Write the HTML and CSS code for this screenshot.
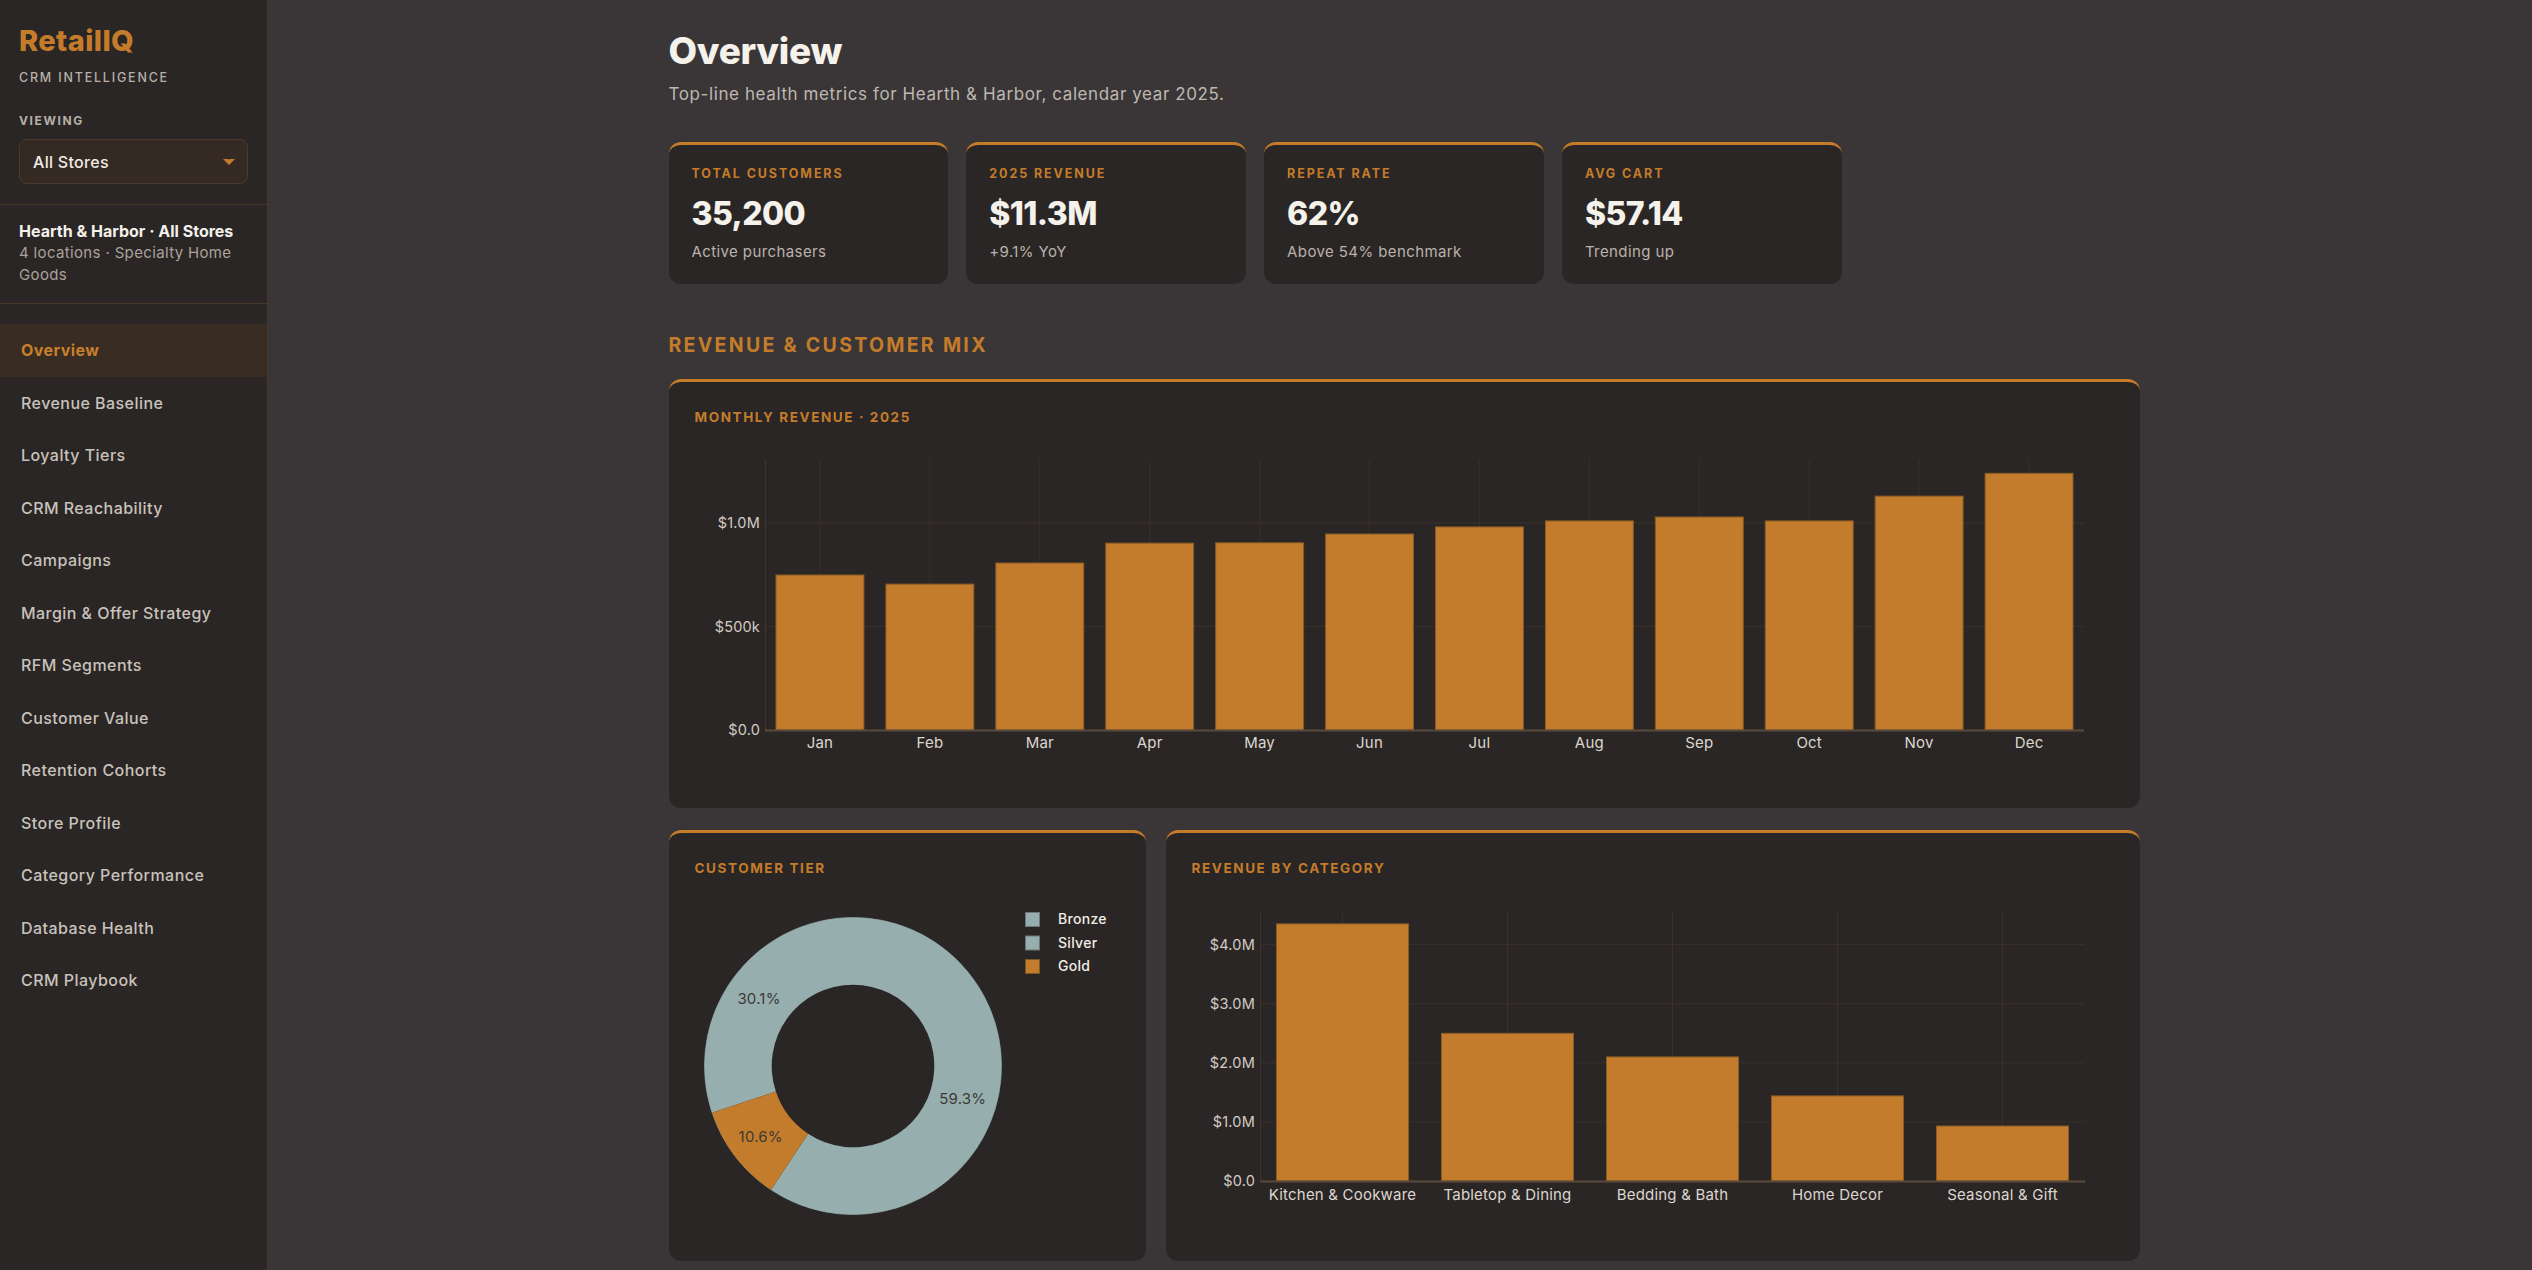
FILE: index.html
```html
<!DOCTYPE html>
<html lang="en">
<head>
<meta charset="utf-8">
<title>RetailIQ · Overview</title>
<link rel="stylesheet" href="styles.css">
</head>
<body>
<div class="app">
  <aside class="sidebar">
    <div class="brand">
      <div class="logo">RetailIQ</div>
      <div class="tagline">CRM INTELLIGENCE</div>
      <div class="viewing-label">VIEWING</div>
      <div class="select">
        <span>All Stores</span>
        <svg class="caret" width="12" height="6" viewBox="0 0 12 6"><polygon points="0,0 5.4,0 6,1 6.6,0 12,0 6,6" /></svg>
      </div>
    </div>
    <div class="store">
      <div class="store-name">Hearth &amp; Harbor · All Stores</div>
      <div class="store-desc">4 locations · Specialty Home Goods</div>
    </div>
    <nav class="nav">
      <a class="nav-item active">Overview</a>
      <a class="nav-item">Revenue Baseline</a>
      <a class="nav-item">Loyalty Tiers</a>
      <a class="nav-item">CRM Reachability</a>
      <a class="nav-item">Campaigns</a>
      <a class="nav-item">Margin &amp; Offer Strategy</a>
      <a class="nav-item">RFM Segments</a>
      <a class="nav-item">Customer Value</a>
      <a class="nav-item">Retention Cohorts</a>
      <a class="nav-item">Store Profile</a>
      <a class="nav-item">Category Performance</a>
      <a class="nav-item">Database Health</a>
      <a class="nav-item">CRM Playbook</a>
    </nav>
  </aside>

  <main class="main">
    <div class="content">
      <h1 class="page-title">Overview</h1>
      <p class="page-sub">Top-line health metrics for Hearth &amp; Harbor, calendar year 2025.</p>

      <div class="kpis">
        <div class="kpi">
          <div class="kpi-label">TOTAL CUSTOMERS</div>
          <div class="kpi-value">35,200</div>
          <div class="kpi-sub">Active purchasers</div>
        </div>
        <div class="kpi">
          <div class="kpi-label">2025 REVENUE</div>
          <div class="kpi-value">$11.3M</div>
          <div class="kpi-sub">+9.1% YoY</div>
        </div>
        <div class="kpi">
          <div class="kpi-label">REPEAT RATE</div>
          <div class="kpi-value">62%</div>
          <div class="kpi-sub">Above 54% benchmark</div>
        </div>
        <div class="kpi">
          <div class="kpi-label">AVG CART</div>
          <div class="kpi-value">$57.14</div>
          <div class="kpi-sub">Trending up</div>
        </div>
      </div>

      <h2 class="section-title">REVENUE &amp; CUSTOMER MIX</h2>

      <div class="card">
        <div class="card-title">MONTHLY REVENUE · 2025</div>
        <svg class="chart chart-monthly" viewBox="0 0 1419 350" width="1419" height="350">
          <g class="grid">
            <line x1="124.96" y1="18" x2="124.96" y2="288"/>
            <line x1="234.87" y1="18" x2="234.87" y2="288"/>
            <line x1="344.79" y1="18" x2="344.79" y2="288"/>
            <line x1="454.71" y1="18" x2="454.71" y2="288"/>
            <line x1="564.63" y1="18" x2="564.63" y2="288"/>
            <line x1="674.54" y1="18" x2="674.54" y2="288"/>
            <line x1="784.46" y1="18" x2="784.46" y2="288"/>
            <line x1="894.38" y1="18" x2="894.38" y2="288"/>
            <line x1="1004.29" y1="18" x2="1004.29" y2="288"/>
            <line x1="1114.21" y1="18" x2="1114.21" y2="288"/>
            <line x1="1224.13" y1="18" x2="1224.13" y2="288"/>
            <line x1="1334.04" y1="18" x2="1334.04" y2="288"/>
            <line x1="70" y1="81" x2="1389" y2="81"/>
            <line x1="70" y1="184.5" x2="1389" y2="184.5"/>
          </g>
          <line class="axis-y" x1="70.5" y1="18" x2="70.5" y2="288"/>
          <g class="bars">
            <rect x="80.99" y="133.0" width="87.93" height="155.0"/>
            <rect x="190.91" y="142.1" width="87.93" height="145.9"/>
            <rect x="300.82" y="121.0" width="87.93" height="167.0"/>
            <rect x="410.74" y="101.1" width="87.93" height="186.9"/>
            <rect x="520.66" y="100.8" width="87.93" height="187.2"/>
            <rect x="630.58" y="92.0" width="87.93" height="196.0"/>
            <rect x="740.49" y="84.9" width="87.93" height="203.1"/>
            <rect x="850.41" y="78.9" width="87.93" height="209.1"/>
            <rect x="960.33" y="75.0" width="87.93" height="213.0"/>
            <rect x="1070.24" y="78.9" width="87.93" height="209.1"/>
            <rect x="1180.16" y="54.1" width="87.93" height="233.9"/>
            <rect x="1290.08" y="31.3" width="87.93" height="256.7"/>
          </g>
          <line class="axis-x" x1="70" y1="288.5" x2="1389" y2="288.5"/>
          <g class="ytick">
            <text x="65" y="86">$1.0M</text>
            <text x="65" y="189.5">$500k</text>
            <text x="65" y="293">$0.0</text>
          </g>
          <g class="xtick">
            <text x="124.96" y="306">Jan</text>
            <text x="234.87" y="306">Feb</text>
            <text x="344.79" y="306">Mar</text>
            <text x="454.71" y="306">Apr</text>
            <text x="564.63" y="306">May</text>
            <text x="674.54" y="306">Jun</text>
            <text x="784.46" y="306">Jul</text>
            <text x="894.38" y="306">Aug</text>
            <text x="1004.29" y="306">Sep</text>
            <text x="1114.21" y="306">Oct</text>
            <text x="1224.13" y="306">Nov</text>
            <text x="1334.04" y="306">Dec</text>
          </g>
        </svg>
      </div>

      <div class="card-row">
        <div class="card card-tier">
          <div class="card-title">CUSTOMER TIER</div>
          <svg class="chart chart-donut" viewBox="0 0 425 352" width="425" height="352">
            <circle class="ring-edge" cx="158" cy="173" r="148.5"/>
            <path class="slice-silver" d="M158 24.5 A148.5 148.5 0 1 1 76.07 296.86 L113.15 240.81 A81.3 81.3 0 1 0 158 91.7 Z"/>
            <path class="slice-silver" d="M17.06 219.78 A148.5 148.5 0 0 1 158 24.5 L158 91.7 A81.3 81.3 0 0 0 80.84 198.61 Z"/>
            <path class="slice-gold" d="M76.07 296.86 A148.5 148.5 0 0 1 17.06 219.78 L80.84 198.61 A81.3 81.3 0 0 0 113.15 240.81 Z"/>
            <g class="slice-label">
              <text x="267.7" y="211">59.3%</text>
              <text x="64" y="111">30.1%</text>
              <text x="65.7" y="249">10.6%</text>
            </g>
            <g class="legend">
              <rect class="swatch-silver" x="330.5" y="19.5" width="14" height="14"/>
              <text x="363" y="31">Bronze</text>
              <rect class="swatch-silver" x="330.5" y="43" width="14" height="14"/>
              <text x="363" y="54.5">Silver</text>
              <rect class="swatch-gold" x="330.5" y="66.5" width="14" height="14"/>
              <text x="363" y="78">Gold</text>
            </g>
          </svg>
        </div>

        <div class="card card-category">
          <div class="card-title">REVENUE BY CATEGORY</div>
          <svg class="chart chart-category" viewBox="0 0 921 352" width="921" height="352">
            <g class="grid">
              <line x1="150.5" y1="18" x2="150.5" y2="288"/>
              <line x1="315.5" y1="18" x2="315.5" y2="288"/>
              <line x1="480.5" y1="18" x2="480.5" y2="288"/>
              <line x1="645.5" y1="18" x2="645.5" y2="288"/>
              <line x1="810.5" y1="18" x2="810.5" y2="288"/>
              <line x1="68" y1="228.9" x2="893" y2="228.9"/>
              <line x1="68" y1="169.8" x2="893" y2="169.8"/>
              <line x1="68" y1="110.7" x2="893" y2="110.7"/>
              <line x1="68" y1="51.6" x2="893" y2="51.6"/>
            </g>
            <line class="axis-y" x1="68.5" y1="18" x2="68.5" y2="288"/>
            <g class="bars">
              <rect x="84.5" y="30.9" width="132" height="257.1"/>
              <rect x="249.5" y="140.3" width="132" height="147.7"/>
              <rect x="414.5" y="163.9" width="132" height="124.1"/>
              <rect x="579.5" y="202.9" width="132" height="85.1"/>
              <rect x="744.5" y="233.0" width="132" height="55.0"/>
            </g>
            <line class="axis-x" x1="68" y1="288.5" x2="893" y2="288.5"/>
            <g class="ytick">
              <text x="63" y="56.6">$4.0M</text>
              <text x="63" y="115.7">$3.0M</text>
              <text x="63" y="174.8">$2.0M</text>
              <text x="63" y="233.9">$1.0M</text>
              <text x="63" y="293">$0.0</text>
            </g>
            <g class="xtick">
              <text x="150.5" y="307">Kitchen &amp; Cookware</text>
              <text x="315.5" y="307">Tabletop &amp; Dining</text>
              <text x="480.5" y="307">Bedding &amp; Bath</text>
              <text x="645.5" y="307">Home Decor</text>
              <text x="810.5" y="307">Seasonal &amp; Gift</text>
            </g>
          </svg>
        </div>
      </div>
    </div>
  </main>
</div>
</body>
</html>
```

FILE: styles.css
```css
html, body {
  margin: 0;
  height: 100%;
  overflow: hidden;
}

body {
  background: #3a3637;
  color: #f3efe9;
  font-family: "Inter", "Noto Sans", sans-serif;
}

.app {
  display: flex;
  height: 100vh;
}

/* ---------- Sidebar ---------- */
.sidebar {
  width: 268px;
  flex: 0 0 268px;
  box-sizing: border-box;
  background: #2a2625;
  border-right: 1px solid #47362a;
  display: flex;
  flex-direction: column;
}

.brand {
  padding: 24px 19px 20px;
  border-bottom: 1px solid #47362a;
}

.logo {
  font-size: 29px;
  line-height: 34px;
  font-weight: 800;
  color: #c47c2b;
  letter-spacing: 0.4px;
}

.tagline {
  margin-top: 12px;
  font-size: 12.5px;
  line-height: 16px;
  letter-spacing: 1.8px;
  color: #b7b0a9;
  font-weight: 500;
}

.viewing-label {
  margin-top: 27px;
  font-size: 12px;
  line-height: 16px;
  font-weight: 700;
  letter-spacing: 1.6px;
  color: #b7b0a9;
}

.select {
  margin-top: 10px;
  height: 45px;
  box-sizing: border-box;
  border: 1px solid #4b3a2b;
  border-radius: 8px;
  background: #342a23;
  display: flex;
  align-items: center;
  justify-content: space-between;
  padding: 0 12px 0 13px;
  font-size: 16px;
  font-weight: 500;
  letter-spacing: 0.3px;
  color: #f1ece6;
}

.caret {
  fill: #c47c2b;
}

.store {
  padding: 15px 19px 17px;
  border-bottom: 1px solid #47362a;
}

.store-name {
  font-size: 16px;
  line-height: 22px;
  font-weight: 700;
  color: #f4f0ea;
}

.store-desc {
  font-size: 15px;
  line-height: 22px;
  letter-spacing: 0.35px;
  color: #aaa29b;
}

.nav {
  padding-top: 20px;
  display: flex;
  flex-direction: column;
}

.nav-item {
  display: block;
  height: 52.5px;
  line-height: 52.5px;
  padding-left: 21px;
  font-size: 16px;
  font-weight: 500;
  letter-spacing: 0.45px;
  color: #c9c2bb;
}

.nav-item.active {
  background: #392d23;
  color: #c97f2c;
  font-weight: 700;
}

/* ---------- Main ---------- */
.main {
  flex: 1;
  padding: 29px 32px 0 40px;
  min-width: 0;
}

.content {
  max-width: 1471px;
  margin: 0 auto;
}

.page-title {
  margin: 0;
  font-size: 37px;
  line-height: 44px;
  font-weight: 800;
  color: #f5f1eb;
  letter-spacing: -0.3px;
}

.page-sub {
  margin: 8px 0 0;
  font-size: 17px;
  line-height: 26px;
  letter-spacing: 0.6px;
  color: #bfb8b1;
}

.kpis {
  margin-top: 35px;
  display: grid;
  grid-template-columns: repeat(5, 1fr);
  gap: 18px;
}

.kpi {
  background: #2a2625;
  border-top: 3px solid #c47c2b;
  border-radius: 12px;
  padding: 20px 23px;
  height: 142px;
  box-sizing: border-box;
}

.kpi-label {
  font-size: 12.5px;
  line-height: 18px;
  font-weight: 700;
  letter-spacing: 1.9px;
  color: #c47c2b;
}

.kpi-value {
  margin-top: 10px;
  font-size: 32px;
  line-height: 42px;
  font-weight: 800;
  letter-spacing: -0.6px;
  color: #f5f1eb;
}

.kpi-sub {
  margin-top: 6px;
  font-size: 15px;
  line-height: 22px;
  letter-spacing: 0.4px;
  color: #bab2ab;
}

.section-title {
  margin: 47px 0 20px;
  font-size: 19.5px;
  line-height: 28px;
  font-weight: 700;
  letter-spacing: 2.3px;
  color: #c47c2b;
}

.card {
  background: #2a2625;
  border-top: 3px solid #c47c2b;
  border-radius: 12px;
  padding: 26px 26px 16px;
}

.card-title {
  font-size: 13.5px;
  line-height: 18px;
  font-weight: 700;
  letter-spacing: 1.6px;
  color: #c47c2b;
}

.chart {
  display: block;
  margin-top: 16px;
  overflow: visible;
}

.card-row {
  margin-top: 22px;
  display: flex;
  gap: 20px;
}

.card-tier {
  flex: 0 0 477px;
  box-sizing: border-box;
}

.card-category {
  flex: 1;
  min-width: 0;
}

/* ---------- Chart parts ---------- */
.grid line {
  stroke: #3a3029;
  stroke-width: 1;
}

.axis-y {
  stroke: #3e342d;
  stroke-width: 1;
}

.axis-x {
  stroke: #5a4a3c;
  stroke-width: 2;
}

.bars rect {
  fill: #c27c2c;
  stroke: #8a5a26;
  stroke-width: 1;
}

.ytick text {
  font-size: 14.5px;
  letter-spacing: 0.2px;
  fill: #d2cbc4;
  text-anchor: end;
}

.xtick text {
  font-size: 15px;
  letter-spacing: 0.2px;
  fill: #ddd6cf;
  text-anchor: middle;
}

.ring-edge {
  fill: none;
  stroke: #6f7f7f;
  stroke-width: 1;
}

.slice-silver {
  fill: #96aeae;
}

.slice-gold {
  fill: #c27c2c;
}

.slice-label text {
  font-size: 15px;
  letter-spacing: 0.2px;
  fill: #3e3836;
  text-anchor: middle;
}

.legend text {
  font-size: 14px;
  font-weight: 500;
  letter-spacing: 0.3px;
  fill: #f1ece6;
}

.swatch-silver {
  fill: #96aeae;
  stroke: #6d7676;
  stroke-width: 1;
}

.swatch-gold {
  fill: #c27c2c;
  stroke: #7a5628;
  stroke-width: 1;
}
```
